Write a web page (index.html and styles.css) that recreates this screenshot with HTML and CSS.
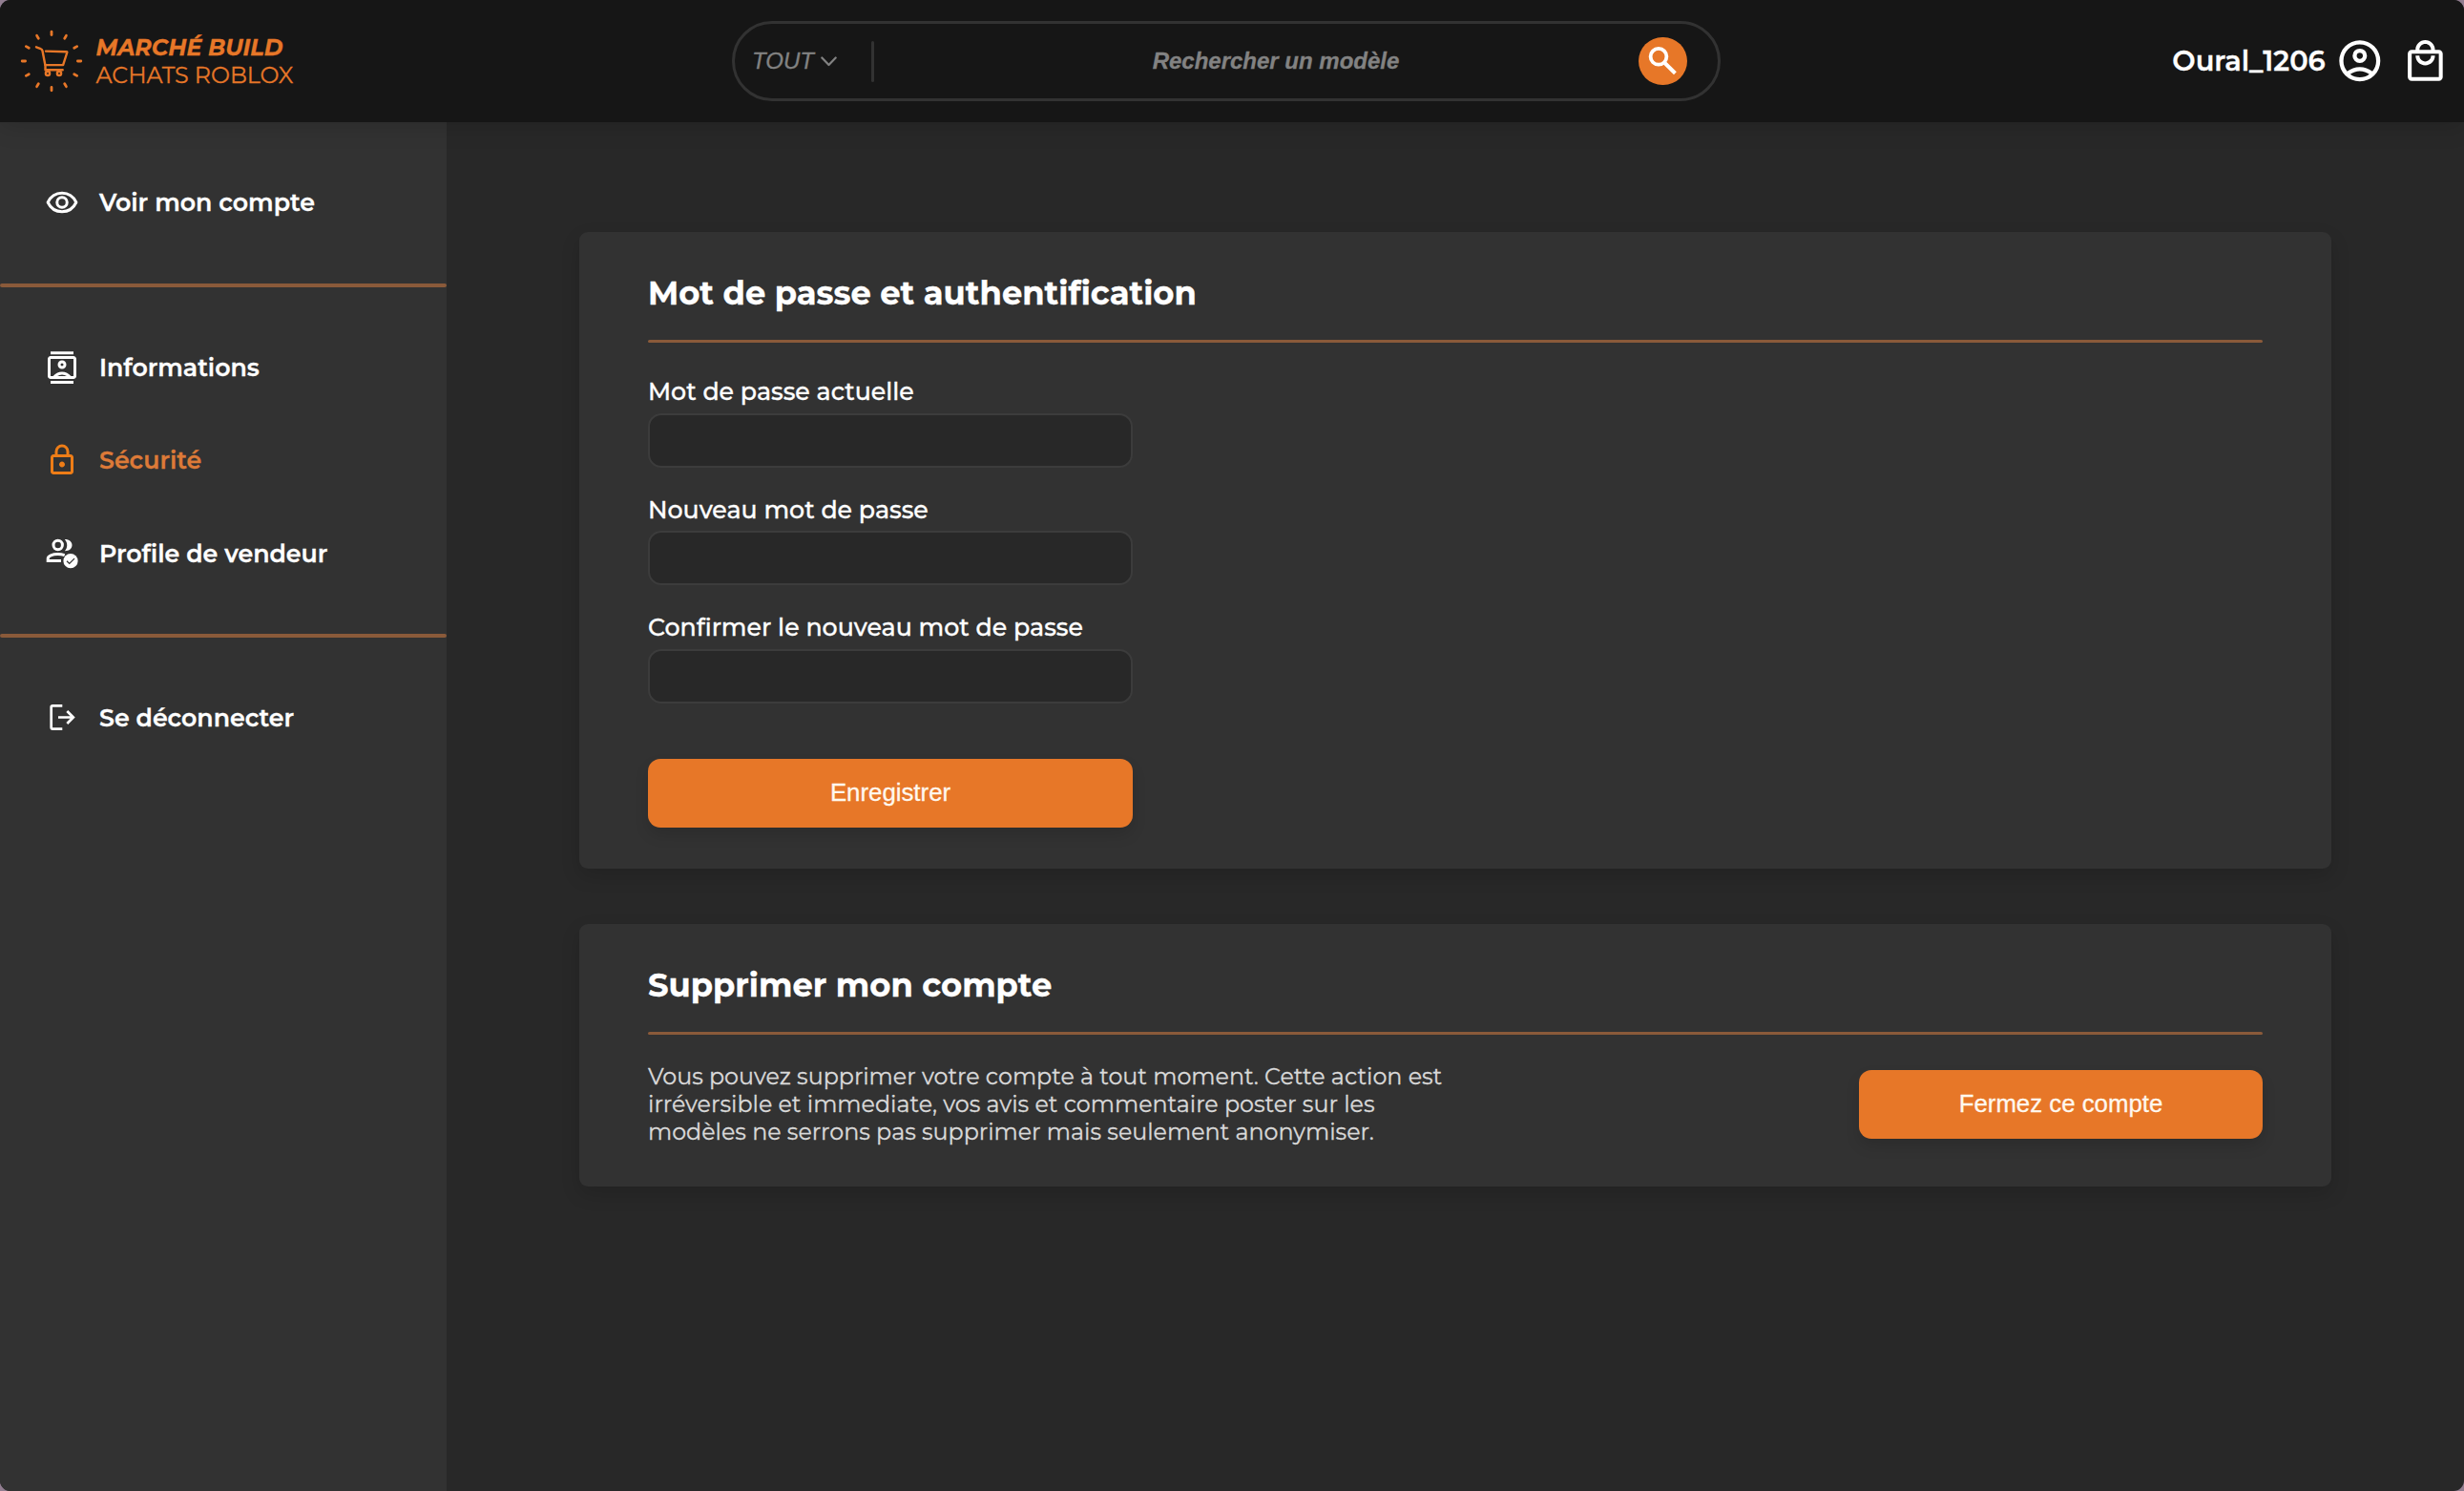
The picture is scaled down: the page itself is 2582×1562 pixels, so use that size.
FILE: index.html
```html
<!DOCTYPE html>
<html lang="fr">
<head>
<meta charset="utf-8">
<title>Marché Build – Sécurité</title>
<link rel="stylesheet" href="styles.css">
</head>
<body>
<div class="window">
  <header class="header">
    <a class="brand">
      <svg class="brand-logo" viewBox="0 0 70 70" fill="none" stroke="currentColor" stroke-width="2.8" stroke-linecap="round" stroke-linejoin="round">
        <g>
          <path id="ray" d="M35 4.2v3.4"/>
          <use href="#ray" transform="rotate(30 35 35)"/>
          <use href="#ray" transform="rotate(60 35 35)"/>
          <use href="#ray" transform="rotate(90 35 35)"/>
          <use href="#ray" transform="rotate(120 35 35)"/>
          <use href="#ray" transform="rotate(150 35 35)"/>
          <use href="#ray" transform="rotate(180 35 35)"/>
          <use href="#ray" transform="rotate(210 35 35)"/>
          <use href="#ray" transform="rotate(240 35 35)"/>
          <use href="#ray" transform="rotate(270 35 35)"/>
          <use href="#ray" transform="rotate(300 35 35)"/>
          <use href="#ray" transform="rotate(330 35 35)"/>
        </g>
        <g stroke-width="2.4">
          <path d="M19 20.3l4.6 1.8q1.6.5 1.900 2.200l3 15.400v4.500h18.200"/>
          <path d="M29 24.600l21.800.6q.7.1.5.8l-4.200 13.100H28.500"/>
          <circle cx="31" cy="47.900" r="2.100"/>
          <circle cx="43" cy="47.900" r="2.100"/>
        </g>
      </svg>
      <span class="brand-text"><strong>MARCHÉ BUILD</strong><span>ACHATS ROBLOX</span></span>
    </a>
    <div class="search">
      <div class="search-category">TOUT
        <svg class="chevron" viewBox="0 0 17 11" fill="none" stroke="currentColor" stroke-width="2.2" stroke-linecap="round" stroke-linejoin="round"><path d="M1.3 1.5L8.5 9l7.2-7.5"/></svg>
      </div>
      <span class="search-separator"></span>
      <span class="search-placeholder">Rechercher un modèle</span>
      <button class="search-button" aria-label="Rechercher">
        <svg viewBox="0 0 51 50" fill="none" stroke="#fff"><circle cx="21" cy="20.3" r="8.4" stroke-width="3.8"/><path d="M27 26.5l11.4 11.2" stroke-width="4"/></svg>
      </button>
    </div>
    <div class="account">
      <span class="account-name">Oural_1206</span>
      <svg class="account-icon" viewBox="0 -960 960 960" fill="currentColor"><path d="M234-276q51-39 114-61.500T480-360q69 0 132 22.500T726-276q35-41 54.500-93T800-480q0-133-93.500-226.500T480-800q-133 0-226.500 93.500T160-480q0 59 19.500 111t54.500 93Zm246-164q-59 0-99.500-40.500T340-580q0-59 40.500-99.500T480-720q59 0 99.500 40.500T620-580q0 59-40.500 99.500T480-440Zm0 360q-83 0-156-31.500T197-197q-54-54-85.500-127T80-480q0-83 31.500-156T197-763q54-54 127-85.500T480-880q83 0 156 31.500T763-763q54 54 85.500 127T880-480q0 83-31.500 156T763-197q-54 54-127 85.500T480-80Zm0-80q53 0 100-15.500t86-44.500q-39-29-86-44.500T480-280q-53 0-100 15.500T294-220q39 29 86 44.500T480-160Zm0-360q26 0 43-17t17-43q0-26-17-43t-43-17q-26 0-43 17t-17 43q0 26 17 43t43 17Z"/></svg>
      <svg class="bag-icon" viewBox="0 0 24 24" fill="currentColor"><path d="M19 6h-2c0-2.760-2.240-5-5-5S7 3.240 7 6H5c-1.100 0-2 .9-2 2v12c0 1.100.9 2 2 2h14c1.100 0 2-.9 2-2V8c0-1.100-.9-2-2-2zm-7-3c1.660 0 3 1.340 3 3H9c0-1.660 1.340-3 3-3zm7 17H5V8h14v12zm-7-8c-1.660 0-3-1.340-3-3H7c0 2.760 2.240 5 5 5s5-2.240 5-5h-2c0 1.660-1.340 3-3 3z"/></svg>
    </div>
  </header>

  <div class="body">
    <nav class="sidebar">
      <div class="nav-group">
        <a class="nav-item">
          <svg viewBox="0 0 24 24" fill="none" stroke="currentColor" stroke-width="2" stroke-linejoin="round"><path d="M2.100 12C4 8 7.800 5.500 12 5.500s8 2.500 9.900 6.500c-1.900 4-5.700 6.500-9.900 6.500S4 16 2.100 12Z"/><circle cx="12" cy="12" r="3.500"/></svg>
          Voir mon compte
        </a>
      </div>
      <div class="nav-group">
        <a class="nav-item">
          <svg viewBox="0 -960 960 960" fill="currentColor" fill-rule="evenodd"><path d="M160-30v-80h640v80H160Zm0-820v-80h640v80H160Zm320 410q50 0 85-35t35-85q0-50-35-85t-85-35q-50 0-85 35t-35 85q0 50 35 85t85 35Zm0-80q-17 0-28.500-11.500T440-560q0-17 11.500-28.500T480-600q17 0 28.500 11.500T520-560q0 17-11.500 28.500T480-520ZM160-160q-33 0-56.500-23.500T80-240v-480q0-33 23.500-56.500T160-800h640q33 0 56.500 23.500T880-720v480q0 33-23.500 56.500T800-160H160Zm70-80q45-56 109-88t141-32q77 0 141 32t109 88h70v-480H160v480h70Zm118 0h264q-29-20-62.500-30T480-280q-36 0-69.500 10T348-240Z"/></svg>
          Informations
        </a>
        <a class="nav-item active">
          <svg viewBox="0 -960 960 960" fill="currentColor"><path d="M240-80q-33 0-56.500-23.500T160-160v-400q0-33 23.500-56.500T240-640h40v-80q0-83 58.500-141.500T480-920q83 0 141.500 58.500T680-720v80h40q33 0 56.500 23.500T800-560v400q0 33-23.500 56.500T720-80H240Zm0-80h480v-400H240v400Zm240-120q33 0 56.500-23.500T560-360q0-33-23.500-56.500T480-440q-33 0-56.500 23.500T400-360q0 33 23.500 56.500T480-280ZM360-640h240v-80q0-50-35-85t-85-35q-50 0-85 35t-35 85v80Z"/></svg>
          Sécurité
        </a>
        <a class="nav-item">
          <svg viewBox="0 0 36 36" fill="none" stroke="currentColor" stroke-width="3"><circle cx="13.700" cy="9" r="4.700"/><path d="M17 25.500H3.200V23C3.200 20.500 8 18.500 13.500 18.500c2.800 0 5 .4 7.200 1.200"/><path fill="currentColor" stroke="none" d="M20.800 3c5 0 7.700 2.700 7.700 6.100s-2.700 6.200-7.700 6.200c3.300-3.500 3.300-8.800 0-12.300Z"/><circle cx="27" cy="25.700" r="7.600" fill="currentColor" stroke="none"/><path d="M23 25.800l2.700 2.600 5.300-5.300" stroke="#323232" stroke-width="1.300"/></svg>
          Profile de vendeur
        </a>
      </div>
      <div class="nav-group">
        <a class="nav-item">
          <svg viewBox="0 0 36 36" fill="none" stroke="currentColor" stroke-width="2.700"><path d="M18.300 5.400H8.200q-1.500 0-1.500 1.500v21.200q0 1.500 1.500 1.500h10.100M14 17.500h15.500M23.300 11l6.500 6.500-6.500 6.500"/></svg>
          Se déconnecter
        </a>
      </div>
    </nav>

    <main class="main">
      <section class="card">
        <h2 class="card-title">Mot de passe et authentification</h2>
        <form class="form">
          <label class="field">Mot de passe actuelle<input type="password"></label>
          <label class="field">Nouveau mot de passe<input type="password"></label>
          <label class="field">Confirmer le nouveau mot de passe<input type="password"></label>
          <button class="button" type="button">Enregistrer</button>
        </form>
      </section>
      <section class="card">
        <h2 class="card-title">Supprimer mon compte</h2>
        <div class="close-account">
          <p>Vous pouvez supprimer votre compte à tout moment. Cette action est irréversible et immediate, vos avis et commentaire poster sur les modèles ne serrons pas supprimer mais seulement anonymiser.</p>
          <button class="button" type="button">Fermez ce compte</button>
        </div>
      </section>
    </main>
  </div>
</div>
</body>
</html>
```
FILE: styles.css
```css
:root {
  --accent: #e77728;
  --accent-dim: #8a5a3a;
  --panel: #323232;
  --page: #282828;
}

* { box-sizing: border-box; }

body {
  margin: 0;
  background: #917d90;
  color: #fff;
  font-family: "Montserrat", "Inter", sans-serif;
  -webkit-text-stroke: .3px;
}

.window {
  display: flex;
  flex-direction: column;
  height: 100vh;
  overflow: hidden;
  border-radius: 11px;
  background: var(--page);
}

/* Header */
.header {
  position: relative;
  z-index: 1;
  display: grid;
  grid-template-columns: 748px 1036px 1fr;
  align-items: center;
  height: 128px;
  flex: none;
  padding: 0 16.6px 0 19px;
  background: #161616;
  box-shadow: 0 4px 24px rgba(0, 0, 0, .15);
}

.brand {
  display: flex;
  align-items: center;
  gap: 11.5px;
  color: var(--accent);
}

.brand-logo { width: 70px; height: 70px; }

.brand-text {
  display: flex;
  flex-direction: column;
  font-size: 23.75px;
  line-height: 29px;
}

.brand-text strong { font-weight: 700; font-style: italic; }

.search {
  display: flex;
  align-items: center;
  height: 84px;
  padding: 0 32px 0 18px;
  border: 3px solid var(--panel);
  border-radius: 42px;
  color: #828282;
  font-family: "Liberation Sans", Arial, sans-serif;
  font-style: italic;
  font-size: 24px;
}

.search-category {
  display: flex;
  align-items: center;
  gap: 7px;
  width: 125px;
}

.chevron { width: 17px; height: 11px; }

.search-separator {
  width: 3px;
  height: 43px;
  border-radius: 2px;
  background: var(--panel);
}

.search-placeholder {
  flex: 1;
  padding-left: 41px;
  text-align: center;
  font-weight: 700;
}

.search-button {
  width: 51px;
  height: 50px;
  padding: 0;
  border: 0;
  border-radius: 25px;
  background: var(--accent);
}

.search-button svg { display: block; width: 51px; height: 50px; }

.account {
  display: flex;
  align-items: center;
  justify-content: flex-end;
}

.account-name {
  padding-bottom: 2px;
  font-size: 28.9px;
  font-weight: 600;
}

.account-icon { width: 51.6px; height: 51.6px; margin: 0 18.3px 0 10px; }
.bag-icon { width: 48.8px; height: 48.8px; }

/* Layout */
.body { display: flex; flex: 1; }

.sidebar {
  width: 468px;
  flex: none;
  background: var(--panel);
}

.nav-group { padding: 35px 0; }
.nav-group:first-child { height: 169px; }

.nav-group + .nav-group::before {
  content: "";
  display: block;
  height: 4px;
  margin: -35px 0 35px;
  border-radius: 2px;
  background: var(--accent-dim);
}

.nav-item {
  display: flex;
  align-items: center;
  gap: 21px;
  height: 97.67px;
  padding-left: 47px;
  font-size: 25.25px;
  font-weight: 600;
}

.nav-item svg { width: 36px; height: 36px; }
.nav-item.active { color: #dd7a38; }
.nav-item.active svg { color: #ee7d17; }

.main {
  display: flex;
  flex: 1;
  flex-direction: column;
  gap: 58px;
  padding: 115px 139px;
}

/* Cards */
.card {
  padding: 43px 72px;
  border-radius: 9px;
  background: var(--panel);
  box-shadow: 0 8px 20px rgba(0, 0, 0, .14);
}

.card-title {
  margin: 0;
  font-size: 33.75px;
  font-weight: 700;
  line-height: 41px;
}

.card-title::after {
  content: "";
  display: block;
  height: 3px;
  margin-top: 29px;
  border-radius: 2px;
  background: var(--accent-dim);
}

.form {
  display: flex;
  flex-direction: column;
  gap: 28px;
  width: 508px;
  padding-top: 36px;
}

.field {
  display: flex;
  flex-direction: column;
  gap: 6.5px;
  font-size: 25.25px;
  font-weight: 500;
  line-height: 31px;
}

.field + .field { padding-top: 1px; }

.field input {
  width: 100%;
  height: 57px;
  padding: 0 14px;
  border: 2px solid #3c3c3c;
  border-radius: 14px;
  outline: 0;
  background: var(--page);
  color: #fff;
  font: inherit;
}

.button {
  height: 72px;
  border: 0;
  border-radius: 13px;
  background: var(--accent);
  box-shadow: 0 8px 15px rgba(0, 0, 0, .12);
  color: #fff8ee;
  font-family: "Liberation Sans", Arial, sans-serif;
  font-size: 25.8px;
}

.form .button { margin-top: 30px; }

.close-account {
  display: flex;
  align-items: center;
  justify-content: space-between;
  padding-top: 29px;
}

.close-account p {
  width: 846px;
  margin: 0;
  color: #d9d9d9;
  font-size: 23.78px;
  line-height: 29px;
}

.close-account .button { width: 423px; margin-top: 1px; }
```
